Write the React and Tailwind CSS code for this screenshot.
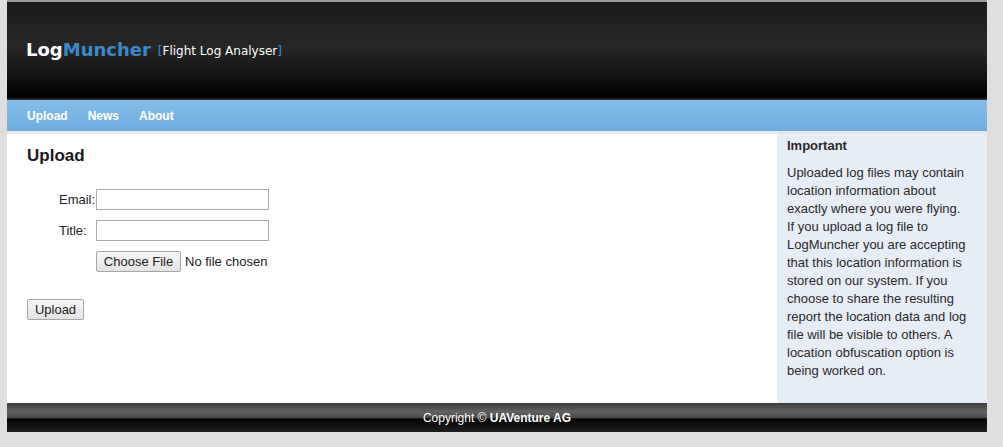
import React from 'react';

const sans = { fontFamily: '"Liberation Sans", Arial, sans-serif' };

const App = () => {
  return (
    <div className="min-h-[447px] w-[1003px] bg-[#dedede] text-[13px] text-[#222]" style={sans}>
      <div className="ml-[7px] w-[980px]">
        {/* Header */}
        <div className="h-[2px] bg-[#9c9c9c]"></div>
        <div className="flex h-[98px] items-center bg-[linear-gradient(to_bottom,#1b1b1b_0%,#262626_45%,#141414_75%,#000_97%,#3a3a3a_100%)] pb-[3px] pl-[19px]">
          <span className="text-[18px] font-bold text-white" style={{ fontFamily: '"DejaVu Sans", sans-serif' }}>
            Log<span className="text-[#3a89cc]">Muncher</span>
          </span>
          <span className="ml-[7px] mt-[2px] text-[12px] text-white" style={{ fontFamily: '"DejaVu Sans", sans-serif' }}>
            <span className="text-[#3a89cc]">[</span>Flight Log Analyser<span className="text-[#3a89cc]">]</span>
          </span>
        </div>

        {/* Nav */}
        <div className="flex h-[31px] items-center gap-[20px] bg-[linear-gradient(to_bottom,#88bfea,#6dabde)] pl-[20px] text-[12px] font-bold text-white">
          <span>Upload</span>
          <span>News</span>
          <span>About</span>
        </div>
        <div className="h-[3px] bg-[#e4e9ee]"></div>

        {/* Main */}
        <div className="flex h-[269px]">
          <div className="flex-1 bg-white pl-[20px] pt-[12px]">
            <h2 className="text-[17px] font-bold leading-[20px] text-[#1a1a1a]">Upload</h2>
            <div className="ml-[32px] mt-[23px] grid grid-cols-[37px_auto] items-center gap-y-[10px]">
              <span>Email:</span>
              <div className="h-[21px] w-[173px] border border-[#a9a9a9] bg-white"></div>
              <span>Title:</span>
              <div className="h-[21px] w-[173px] border border-[#a9a9a9] bg-white"></div>
              <span></span>
              <div className="flex items-center">
                <div className="flex h-[21px] w-[85px] items-center justify-center rounded-[2px] border border-[#a6a6a6] bg-[linear-gradient(to_bottom,#f6f6f6,#e3e3e3)] text-[13px]">
                  Choose File
                </div>
                <span className="ml-[4px]">No file chosen</span>
              </div>
            </div>
            <div className="mt-[27px] flex h-[21px] w-[57px] items-center justify-center rounded-[2px] border border-[#a6a6a6] bg-[linear-gradient(to_bottom,#f6f6f6,#e3e3e3)]">
              Upload
            </div>
          </div>
          <div className="w-[210px] bg-[#e6edf5] pl-[10px] pr-[17px] pt-[3px]">
            <div className="font-bold leading-[18px] text-[#2a2a2a]">Important</div>
            <p className="mt-[9px] leading-[18px] text-[#2a2a2a]">
              Uploaded log files may contain location information about exactly where you were flying. If you upload a log file to LogMuncher you are accepting that this location information is stored on our system. If you choose to share the resulting report the location data and log file will be visible to others. A location obfuscation option is being worked on.
            </p>
          </div>
        </div>

        {/* Footer */}
        <div className="flex h-[29px] items-center justify-center bg-[linear-gradient(to_bottom,#3c3c3c_0%,#626262_30%,#4a4a4a_50%,#050505_55%,#1e1e1e_100%)] text-[12px] text-white">
          Copyright ©&nbsp;<span className="font-bold">UAVenture AG</span>
        </div>
      </div>
    </div>
  );
};

export default App;
